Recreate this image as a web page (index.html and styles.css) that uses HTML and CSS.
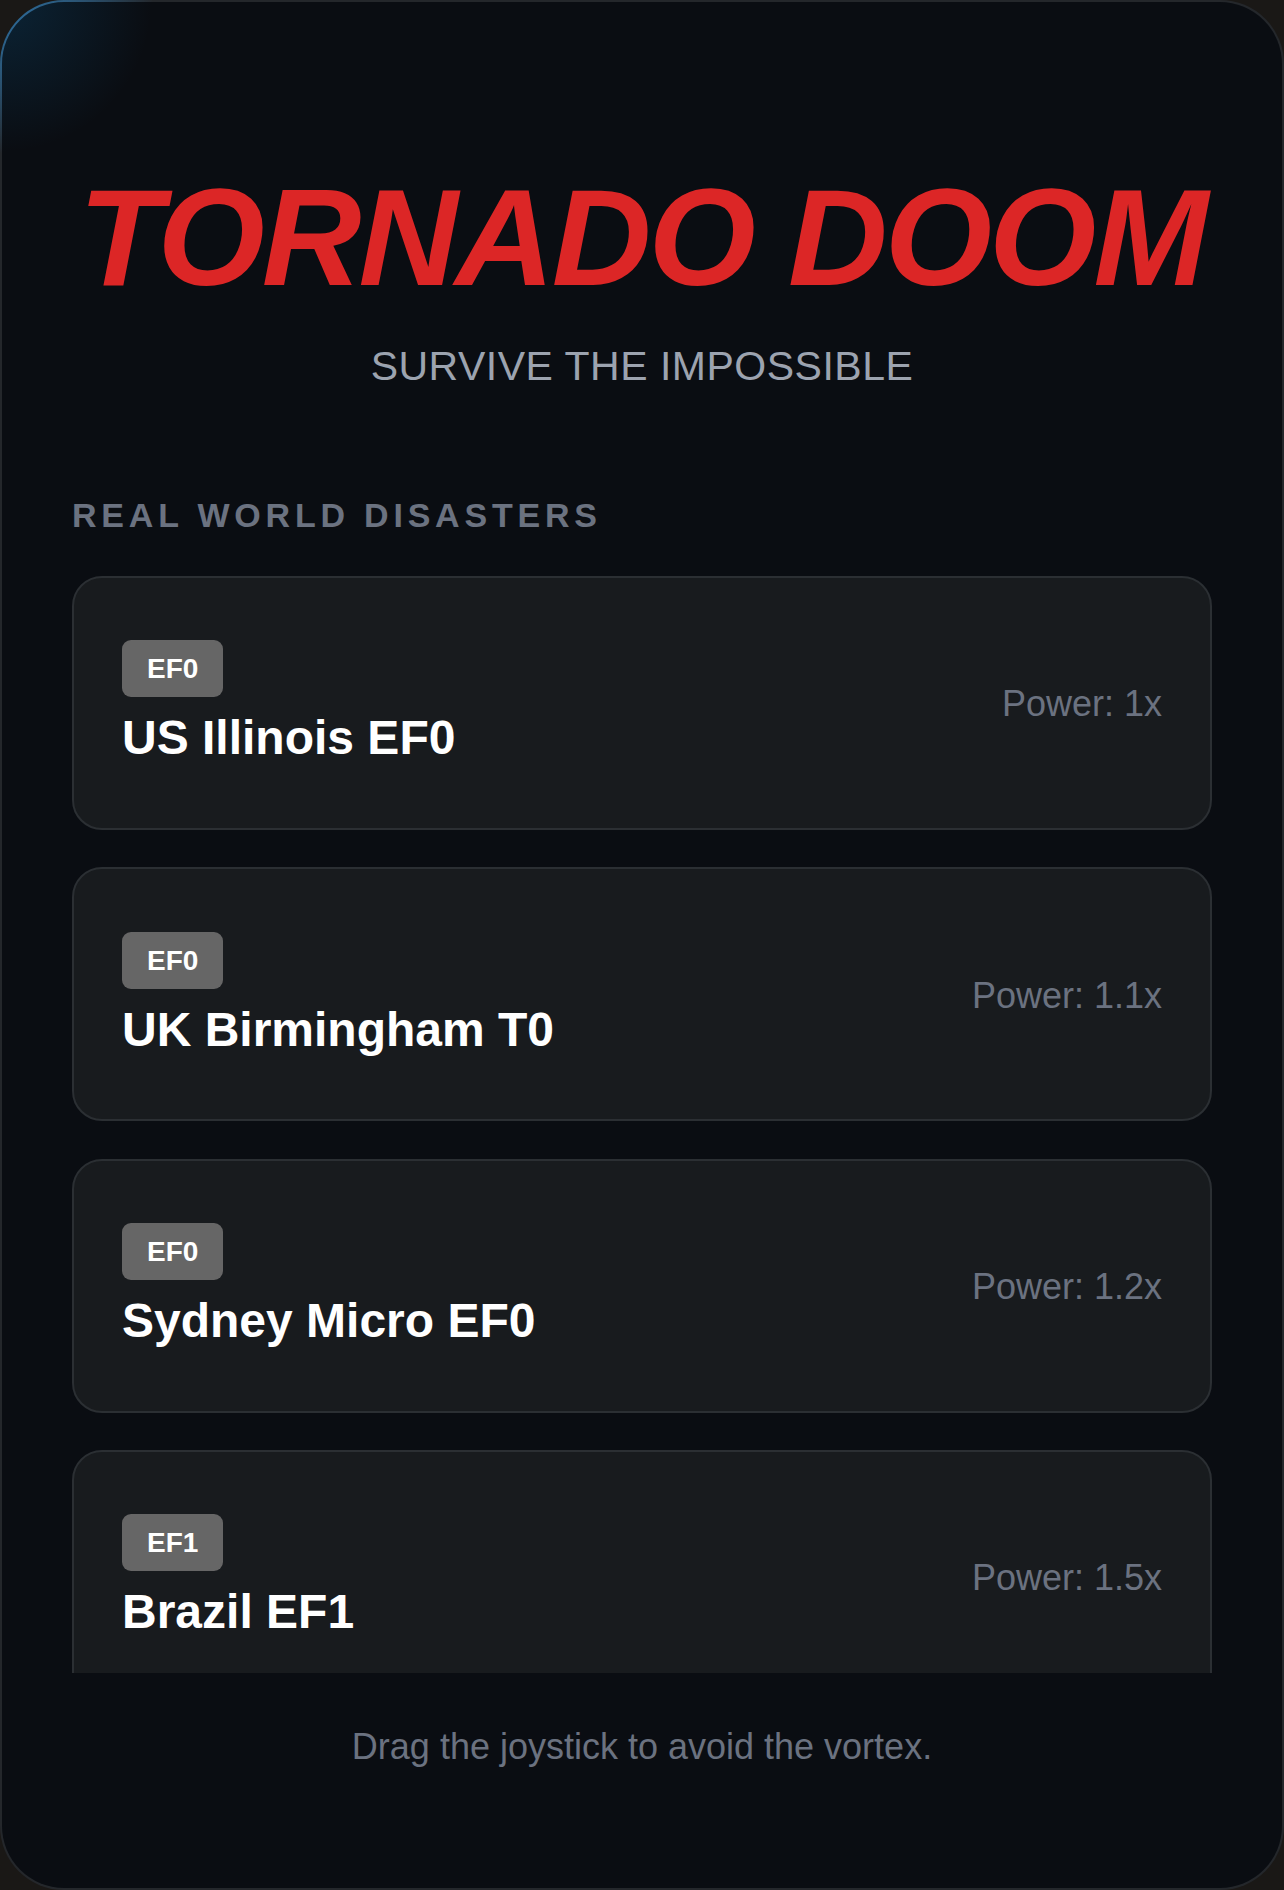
FILE: index.html
```html
<!DOCTYPE html>
<html lang="en">
<head>
  <meta charset="UTF-8">
  <title>Tornado Doom</title>
  <link rel="stylesheet" href="styles.css">
</head>
<body>
  <div class="app">
    <div class="hero">
      <h1 class="title">TORNADO DOOM</h1>
      <p class="subtitle">SURVIVE THE IMPOSSIBLE</p>
    </div>

    <h3 class="section-label">REAL WORLD DISASTERS</h3>

    <div class="level-list">
      <div class="level-card">
        <div class="level-info">
          <span class="badge">EF0</span>
          <div class="level-name">US Illinois EF0</div>
        </div>
        <div class="level-power">Power: 1x</div>
      </div>

      <div class="level-card">
        <div class="level-info">
          <span class="badge">EF0</span>
          <div class="level-name">UK Birmingham T0</div>
        </div>
        <div class="level-power">Power: 1.1x</div>
      </div>

      <div class="level-card">
        <div class="level-info">
          <span class="badge">EF0</span>
          <div class="level-name">Sydney Micro EF0</div>
        </div>
        <div class="level-power">Power: 1.2x</div>
      </div>

      <div class="level-card">
        <div class="level-info">
          <span class="badge">EF1</span>
          <div class="level-name">Brazil EF1</div>
        </div>
        <div class="level-power">Power: 1.5x</div>
      </div>
    </div>

    <p class="hint">Drag the joystick to avoid the vortex.</p>
  </div>
</body>
</html>
```

FILE: styles.css
```css
* {
  box-sizing: border-box;
}

body {
  margin: 0;
  background: #1a1816;
  font-family: "Liberation Sans", Arial, sans-serif;
}

.app {
  height: 100vh;
  display: flex;
  flex-direction: column;
  padding: 0 70px;
  border: 2px solid transparent;
  border-radius: 64px;
  overflow: hidden;
  background:
    radial-gradient(circle at 0 0, rgba(14, 116, 180, 0.22), rgba(14, 116, 180, 0) 150px) padding-box,
    linear-gradient(#0a0d12, #0a0d12) padding-box,
    radial-gradient(circle at 40px 40px, #2f79b0 0, #24272b 120px) border-box;
}

.hero {
  padding-top: 166px;
  text-align: center;
}

.title {
  margin: 0;
  font-size: 138px;
  line-height: 1;
  font-weight: bold;
  font-style: italic;
  letter-spacing: -3px;
  color: #dc2626;
  white-space: nowrap;
}

.subtitle {
  margin: 36px 0 0;
  font-size: 41px;
  line-height: 1.2;
  letter-spacing: 0.5px;
  color: #9ca3af;
}

.section-label {
  margin: 104px 0 40px;
  font-size: 34px;
  line-height: 1.2;
  font-weight: bold;
  letter-spacing: 4.8px;
  color: #6b7280;
}

.level-list {
  flex: 1;
  min-height: 0;
  overflow: hidden;
  display: flex;
  flex-direction: column;
  gap: 37.3px;
}

.level-card {
  flex-shrink: 0;
  display: flex;
  justify-content: space-between;
  align-items: center;
  padding: 62.5px 48px;
  background: #181b1e;
  border: 2px solid #2b2f33;
  border-radius: 30px;
}

.badge {
  display: inline-block;
  padding: 12px 25px;
  line-height: 33px;
  font-size: 28px;
  font-weight: bold;
  color: #fff;
  background: #666;
  border-radius: 9px;
}

.level-name {
  margin-top: 13px;
  font-size: 48px;
  line-height: 55px;
  font-weight: bold;
  color: #fff;
}

.level-power {
  padding-top: 3px;
  font-size: 36px;
  color: #6b7280;
}

.hint {
  margin: 0;
  padding: 52px 0 120px;
  text-align: center;
  font-size: 36px;
  line-height: 1.2;
  color: #6b7280;
}
```
